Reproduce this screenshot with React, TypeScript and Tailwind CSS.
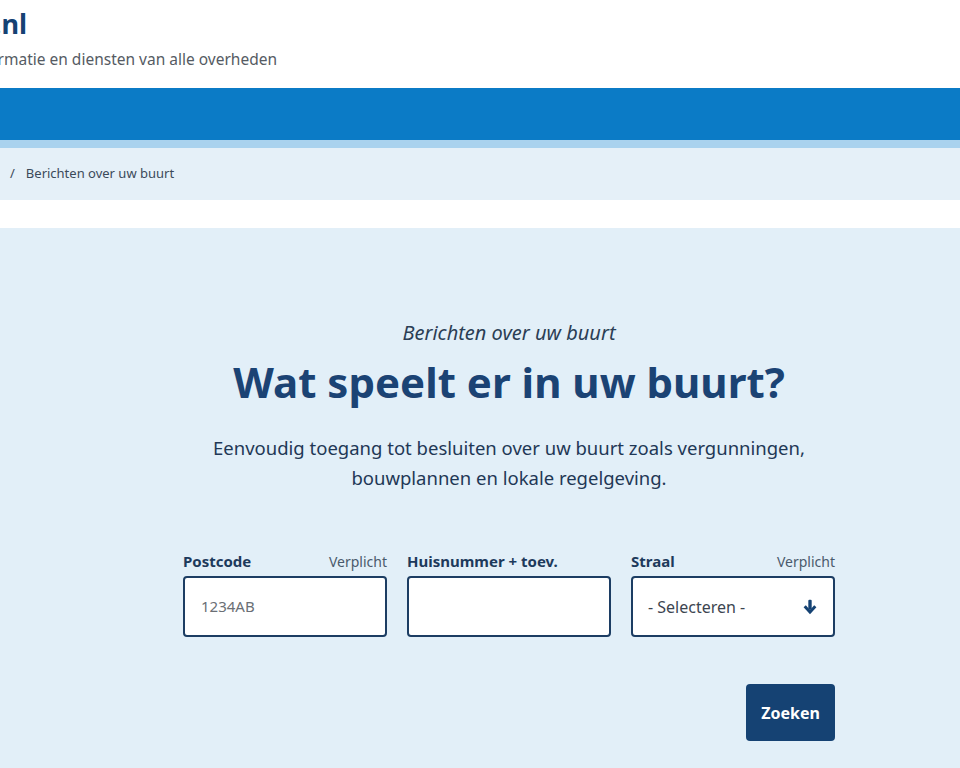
import React from 'react';

const font = { fontFamily: '"Noto Sans", "Open Sans", sans-serif' };

function Field({ label, required, children }: { label: string; required?: boolean; children: React.ReactNode }) {
  return (
    <div className="flex w-[204px] flex-col">
      <div className="flex h-[24px] items-end justify-between pb-[7px]">
        <span className="text-[15px] font-bold leading-none text-[#1d3a5c]">{label}</span>
        {required && <span className="text-[14px] leading-none text-[#4a5a6c]">Verplicht</span>}
      </div>
      {children}
    </div>
  );
}

export default function App() {
  return (
    <div className="min-h-[768px] w-[960px] overflow-hidden bg-white" style={font}>
      {/* header, cut off on the left like the screenshot */}
      <header className="h-[88px] bg-white pt-[6px]">
        <div className="flex w-[27px] justify-end overflow-hidden">
          <span className="whitespace-nowrap text-[27px] font-bold leading-[36px] text-[#154273]">Overheid.nl</span>
        </div>
        <div className="mt-[7px] flex w-[277px] justify-end overflow-hidden">
          <span className="whitespace-nowrap text-[15.5px] leading-[20px] text-[#555b63]">
            Informatie en diensten van alle overheden
          </span>
        </div>
      </header>

      <nav className="h-[52px] bg-[#0b7bc6]" />
      <div className="h-[8px] bg-[#a9d2ee]" />

      <div className="flex h-[52px] items-center bg-[#e5f0f8] pl-[10px] text-[13px] text-[#3b4a5a]">
        <span className="mr-[11px]">/</span>
        <span>Berichten over uw buurt</span>
      </div>

      <div className="h-[28px] bg-white" />

      <main className="min-h-[540px] bg-[#e2eff8] pl-[58px]">
        <div className="mx-auto flex w-[652px] flex-col items-center pt-[90px]">
          <p className="text-[20px] italic leading-[30px] text-[#2b3e55]">Berichten over uw buurt</p>
          <h1 className="mt-[8px] text-[42px] font-bold leading-[52px] text-[#1b4374]">Wat speelt er in uw buurt?</h1>
          <p className="mt-[25px] text-center text-[18.5px] leading-[30px] text-[#1f3856]">
            Eenvoudig toegang tot besluiten over uw buurt zoals vergunningen,
            <br />
            bouwplannen en lokale regelgeving.
          </p>

          <div className="mt-[59px] flex w-full gap-[20px]">
            <Field label="Postcode" required>
              <div className="flex h-[61px] items-center rounded-[4px] border-2 border-[#1c3d63] bg-white px-[16px]">
                <span className="text-[15px] text-[#6b6f75]">1234AB</span>
              </div>
            </Field>
            <Field label="Huisnummer + toev.">
              <div className="h-[61px] rounded-[4px] border-2 border-[#1c3d63] bg-white" />
            </Field>
            <Field label="Straal" required>
              <div className="flex h-[61px] items-center justify-between rounded-[4px] border-2 border-[#1c3d63] bg-white pl-[15px] pr-[14px]">
                <span className="text-[16px] text-[#3c4550]">- Selecteren -</span>
                <svg viewBox="0 0 16 16" className="h-[18px] w-[18px]" fill="#154273">
                  <rect x="6.5" y="1.5" width="3" height="9" rx="1" />
                  <path d="M2.3 8.2 L8 14.4 L13.7 8.2 L11.7 6.5 L8 10.6 L4.3 6.5 Z" />
                </svg>
              </div>
            </Field>
          </div>

          <div className="mt-[47px] flex w-full justify-end">
            <button className="h-[57px] w-[89px] rounded-[4px] bg-[#154273] text-[16px] font-bold text-white">
              Zoeken
            </button>
          </div>
        </div>
      </main>
    </div>
  );
}
